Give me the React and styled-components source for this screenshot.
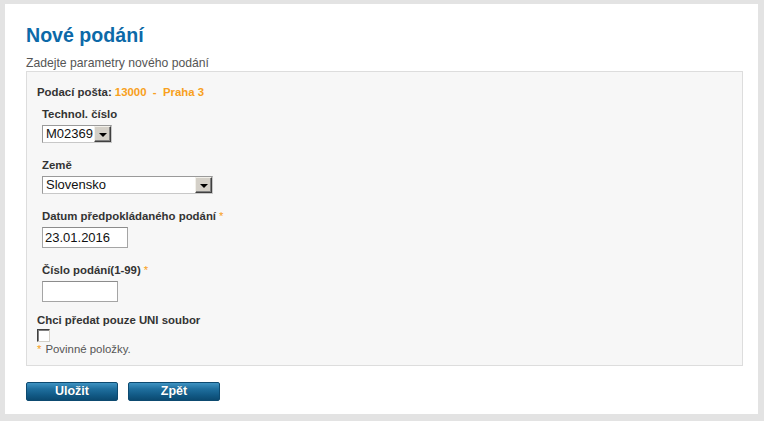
import React from "react";
import styled, { createGlobalStyle } from "styled-components";

const Global = createGlobalStyle`
  html, body { margin: 0; padding: 0; background: #e3e3e3; }
  body { font-family: "Liberation Sans", Arial, sans-serif; }
  * { box-sizing: border-box; }
`;

const Frame = styled.div`
  padding: 4px 6px 7px 5px;
  background: #e3e3e3;
`;

const Page = styled.div`
  background: #ffffff;
  padding: 19px 15px 13px 21px;
`;

const Title = styled.h1`
  margin: 0;
  font-size: 19.6px;
  line-height: 24px;
  font-weight: bold;
  color: #0c69a8;
`;

const Subtitle = styled.div`
  margin-top: 9px;
  font-size: 12.2px;
  line-height: 14px;
  color: #555;
`;

const FormBox = styled.div`
  margin-top: 1px;
  background: #f7f7f7;
  border: 1px solid #dddddd;
  padding: 13px 10px 9px 10px;
`;

const PostLine = styled.div`
  font-size: 11.4px;
  line-height: 14px;
  font-weight: bold;
  color: #333;
`;

const Orange = styled.span`
  color: #f8a020;
  font-weight: ${(p) => (p.$bold ? "bold" : "normal")};
`;

const FieldList = styled.div`
  margin-top: 8px;
  padding-left: 5px;
  display: flex;
  flex-direction: column;
  gap: 15px;
`;

const Field = styled.div`
  display: flex;
  flex-direction: column;
  align-items: flex-start;
`;

const Label = styled.label`
  display: block;
  font-size: 11.4px;
  line-height: 14px;
  font-weight: bold;
  color: #333;
  margin-bottom: 4px;
`;

const SelectBox = styled.div`
  width: ${(p) => p.$w}px;
  height: 18px;
  border: 1px solid #9a9a9a;
  border-right-color: #c8c8c8;
  border-bottom-color: #c8c8c8;
  background: #fff;
  display: flex;
  align-items: stretch;
`;

const SelectValue = styled.div`
  flex: 1;
  font-size: 13px;
  line-height: 16px;
  color: #111;
  padding-left: 3px;
  white-space: nowrap;
  overflow: hidden;
`;

const SelectButton = styled.div`
  width: 17px;
  height: 16px;
  background: #d4d0c8;
  border-top: 1px solid #f2f0ea;
  border-left: 1px solid #f2f0ea;
  border-right: 1px solid #404040;
  border-bottom: 1px solid #404040;
  box-shadow: inset -1px -1px 0 #808080;
  display: flex;
  align-items: center;
  justify-content: center;
`;

const Arrow = styled.div`
  width: 0;
  height: 0;
  border-left: 4px solid transparent;
  border-right: 4px solid transparent;
  border-top: 4px solid #000;
  margin-top: 1px;
`;

const TextInput = styled.div`
  width: ${(p) => p.$w}px;
  height: 21px;
  border: 1px solid #a5a5a5;
  border-top-color: #8c8c8c;
  background: #fff;
  font-size: 13px;
  line-height: 19px;
  padding-left: 2px;
  color: #111;
`;

const Star = styled.span`
  color: #f8a020;
  font-weight: normal;
  margin-left: 3px;
`;

const CheckSection = styled.div`
  margin-top: 11px;
`;

const CheckLabel = styled.div`
  font-size: 11.4px;
  line-height: 14px;
  font-weight: bold;
  color: #333;
`;

const Checkbox = styled.div`
  margin-top: 2px;
  width: 13px;
  height: 13px;
  background: #fff;
  border-top: 1px solid #404040;
  border-left: 1px solid #404040;
  border-right: 1px solid #d4d0c8;
  border-bottom: 1px solid #d4d0c8;
  box-shadow: inset 1px 1px 0 #808080;
`;

const Note = styled.div`
  font-size: 11.4px;
  line-height: 14px;
  color: #555;
`;

const NoteStar = styled.span`
  color: #f8a020;
  margin-right: 4px;
`;

const ButtonRow = styled.div`
  margin-top: 16px;
  display: flex;
  gap: 10px;
`;

const Button = styled.button`
  width: 92px;
  height: 19px;
  padding: 0;
  border: 1px solid #0d4a70;
  border-radius: 2px;
  background: linear-gradient(to bottom, #3f93c2 0%, #1f6f9e 35%, #125a86 70%, #0b4a71 100%);
  color: #fff;
  font-family: "Liberation Sans", Arial, sans-serif;
  font-size: 12.5px;
  font-weight: bold;
  line-height: 17px;
  cursor: pointer;
  text-shadow: 0 0 1px rgba(0, 0, 0, 0.3);
`;

function Select({ width, value }) {
  return (
    <SelectBox $w={width}>
      <SelectValue>{value}</SelectValue>
      <SelectButton>
        <Arrow />
      </SelectButton>
    </SelectBox>
  );
}

export default function App() {
  return (
    <>
      <Global />
      <Frame>
        <Page>
          <Title>Nové podání</Title>
          <Subtitle>Zadejte parametry nového podání</Subtitle>
          <FormBox>
            <PostLine>
              Podací pošta: <Orange $bold>13000&nbsp; - &nbsp;Praha 3</Orange>
            </PostLine>
            <FieldList>
              <Field>
                <Label>Technol. číslo</Label>
                <Select width={70} value="M02369" />
              </Field>
              <Field>
                <Label>Země</Label>
                <Select width={171} value="Slovensko" />
              </Field>
              <Field>
                <Label>
                  Datum předpokládaného podání<Star>*</Star>
                </Label>
                <TextInput $w={86}>23.01.2016</TextInput>
              </Field>
              <Field>
                <Label>
                  Číslo podání(1-99)<Star>*</Star>
                </Label>
                <TextInput $w={76} />
              </Field>
            </FieldList>
            <CheckSection>
              <CheckLabel>Chci předat pouze UNI soubor</CheckLabel>
              <Checkbox />
              <Note>
                <NoteStar>*</NoteStar>Povinné položky.
              </Note>
            </CheckSection>
          </FormBox>
          <ButtonRow>
            <Button>Uložit</Button>
            <Button>Zpět</Button>
          </ButtonRow>
        </Page>
      </Frame>
    </>
  );
}
